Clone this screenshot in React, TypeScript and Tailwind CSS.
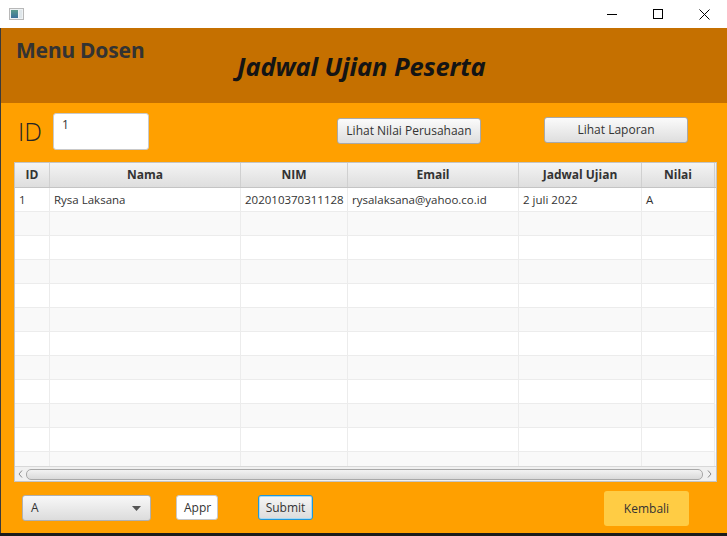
import React from 'react';

const cols = [
  { name: 'ID', w: 'w-[35px]' },
  { name: 'Nama', w: 'w-[191px]' },
  { name: 'NIM', w: 'w-[107px]' },
  { name: 'Email', w: 'w-[171px]' },
  { name: 'Jadwal Ujian', w: 'w-[123px]' },
  { name: 'Nilai', w: 'w-[73px]' },
];

const data = [['1', 'Rysa Laksana', '202010370311128', 'rysalaksana@yahoo.co.id', '2 juli 2022', 'A']];

const App = () => {
  const rows = Array.from({ length: 12 }, (_, i) => data[i] || ['', '', '', '', '', '']);

  return (
    <div className="w-[727px] h-[536px] flex flex-col overflow-hidden bg-white font-['Open_Sans',sans-serif] text-[#333]">
      {/* Title bar */}
      <div className="h-[28px] flex items-center bg-white shrink-0">
        <div className="ml-[9px] w-[15px] h-[12px] border border-[#b8b8b8] bg-[#eef2f4] flex gap-[1px] p-[1px]">
          <div className="w-[7px] h-full bg-gradient-to-b from-[#5a9a8a] to-[#3a6f9a]" />
          <div className="w-[3px] h-full bg-[#dfe6ea]" />
        </div>
        <div className="ml-auto flex items-center">
          <div className="w-[46px] h-[28px] flex items-center justify-center">
            <div className="w-[10px] h-[1px] bg-black" />
          </div>
          <div className="w-[46px] h-[28px] flex items-center justify-center">
            <div className="w-[10px] h-[10px] border border-black" />
          </div>
          <div className="w-[46px] h-[28px] flex items-center justify-center">
            <svg width="11" height="11" viewBox="0 0 11 11">
              <path d="M0.5 0.5 L10.5 10.5 M10.5 0.5 L0.5 10.5" stroke="#000" strokeWidth="1" />
            </svg>
          </div>
        </div>
      </div>

      {/* Header */}
      <div className="h-[75px] shrink-0 bg-[#c57000] border-l border-[#3a3a3a] relative">
        <div className="pl-[15px] pt-[8px] text-[21px] font-bold text-[#333] leading-[28px] font-['Noto_Sans',sans-serif] tracking-[-0.2px]">
          Menu Dosen
        </div>
        <div className="absolute left-[236px] top-[21px] text-[25.5px] font-bold italic text-[#141414] leading-[34px] font-['Noto_Sans',sans-serif] tracking-[-0.1px]">
          Jadwal Ujian Peserta
        </div>
      </div>

      {/* Body */}
      <div className="flex-1 bg-[#ffa000] border-l border-[#3a3a3a] flex flex-col">
        <div className="h-[36px] mt-[10px] flex items-start">
          <div className="ml-[17px] w-[35px] mt-[3px] text-[25px] leading-[30px] font-light text-[#262626]">ID</div>
          <div className="w-[96px] h-[37px] bg-white rounded-[3px] border border-[#c9c9c9] text-[12px] pl-[8px] pt-[2px] leading-[18px]">
            1
          </div>
          <button className="ml-[188px] mt-[5px] w-[144px] h-[26px] rounded-[3px] border border-[#a9a9a9] bg-gradient-to-b from-[#fbfbfb] to-[#dedede] text-[12px] text-[#333]">
            Lihat Nilai Perusahaan
          </button>
          <button className="ml-[63px] mt-[4px] w-[144px] h-[26px] rounded-[3px] border border-[#a9a9a9] bg-gradient-to-b from-[#fbfbfb] to-[#dedede] text-[12px] text-[#333]">
            Lihat Laporan
          </button>
        </div>

        {/* Table */}
        <div className="ml-[13px] mt-[13px] w-[703px] h-[320px] border border-[#c4c4c4] bg-white flex flex-col overflow-hidden">
          <div className="flex h-[25px] shrink-0 border-b border-[#c4c4c4] bg-gradient-to-b from-[#f4f4f4] to-[#dedede]">
            {cols.map((c) => (
              <div
                key={c.name}
                className={`${c.w} shrink-0 border-r border-[#d0d0d0] flex items-center justify-center text-[12px] font-bold text-[#333]`}
              >
                {c.name}
              </div>
            ))}
          </div>
          <div className="flex-1 overflow-hidden">
            {rows.map((r, i) => (
              <div key={i} className={`flex h-[24px] ${i % 2 === 0 ? 'bg-white' : 'bg-[#f9f9f9]'}`}>
                {r.map((cell, j) => (
                  <div
                    key={j}
                    className={`${cols[j].w} shrink-0 border-r border-b border-[#ececec] pl-[4px] text-[11.5px] leading-[23px] text-[#333] whitespace-nowrap overflow-hidden`}
                  >
                    {cell}
                  </div>
                ))}
              </div>
            ))}
          </div>
          {/* Horizontal scrollbar */}
          <div className="h-[15px] shrink-0 bg-[#f0f0f0] border-t border-[#d8d8d8] flex items-center">
            <div className="w-[11px] flex justify-center">
              <svg width="5" height="8" viewBox="0 0 5 8">
                <path d="M4 0.5 L1 4 L4 7.5" stroke="#8a8a8a" fill="none" strokeWidth="1" />
              </svg>
            </div>
            <div className="flex-1 h-[11px] rounded-[5px] border border-[#a8a8a8] bg-gradient-to-b from-[#f2f2f2] to-[#dadada]" />
            <div className="w-[13px] flex justify-center">
              <svg width="5" height="8" viewBox="0 0 5 8">
                <path d="M1 0.5 L4 4 L1 7.5" stroke="#8a8a8a" fill="none" strokeWidth="1" />
              </svg>
            </div>
          </div>
        </div>

        {/* Bottom controls */}
        <div className="flex items-start mt-[9px]">
          <div className="ml-[21px] mt-[4px] w-[129px] h-[26px] rounded-[3px] border border-[#b0b0b0] bg-gradient-to-b from-[#f8f8f8] to-[#dcdcdc] flex items-center pl-[8px] pr-[9px] text-[12px]">
            <span>A</span>
            <svg className="ml-auto" width="9" height="5" viewBox="0 0 9 5">
              <path d="M0 0 L9 0 L4.5 5 Z" fill="#555" />
            </svg>
          </div>
          <div className="ml-[25px] mt-[4px] w-[42px] h-[25px] rounded-[3px] border border-[#c8c8c8] bg-white text-[12px] flex items-center pl-[7px] overflow-hidden whitespace-nowrap">
            Appr
          </div>
          <button className="ml-[40px] mt-[4px] w-[55px] h-[25px] rounded-[3px] border border-[#1f97d9] bg-gradient-to-b from-[#f6f6f6] to-[#dcdcdc] text-[12px] text-[#333] shadow-[inset_0_0_0_1px_#a8d8f2]">
            Submit
          </button>
          <button className="ml-[291px] w-[85px] h-[35px] rounded-[3px] bg-[#ffcc44] text-[12px] text-[#333]">
            Kembali
          </button>
        </div>
        <div className="flex-1" />
      </div>
      <div className="h-[3px] shrink-0 bg-[#1c1c1c]" />
    </div>
  );
};

export default App;
